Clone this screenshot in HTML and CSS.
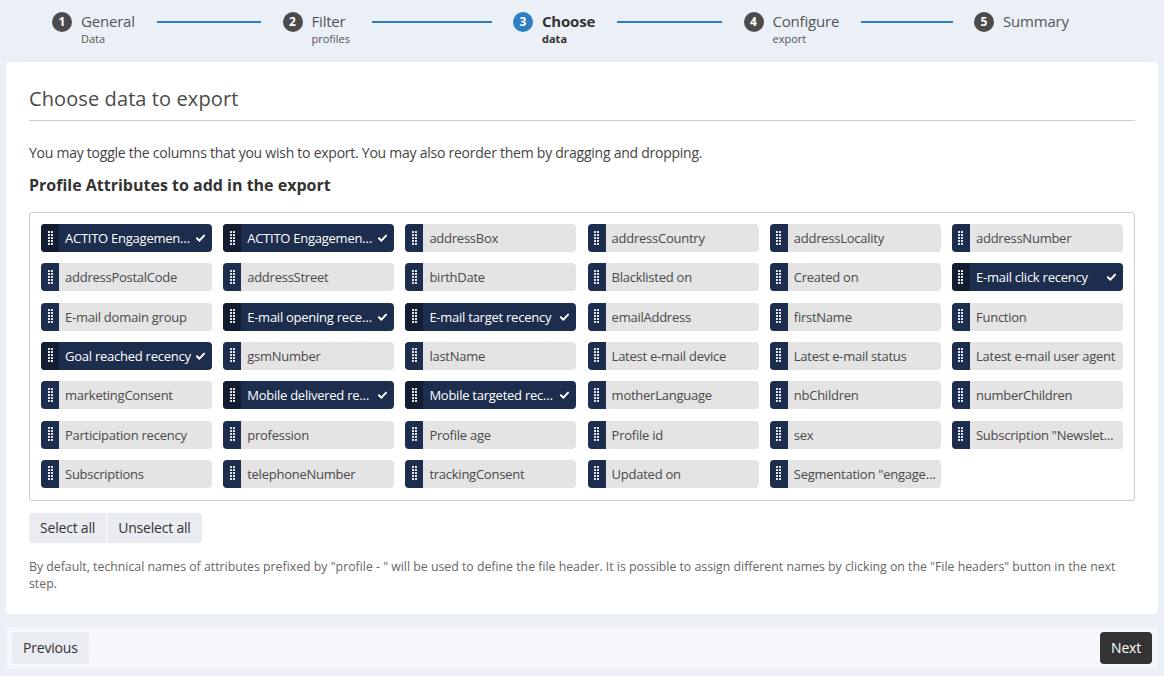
FILE: index.html
```html
<!DOCTYPE html>
<html lang="en">
<head>
<meta charset="utf-8">
<title>Choose data to export</title>
<link rel="stylesheet" href="styles.css">
</head>
<body>
<div class="page">
  <div class="stepper">
    <div class="step"><span class="num">1</span><div class="label"><div class="title">General</div><div class="sub">Data</div></div><span class="line"></span></div>
    <div class="step"><span class="num">2</span><div class="label"><div class="title">Filter</div><div class="sub">profiles</div></div><span class="line"></span></div>
    <div class="step active"><span class="num">3</span><div class="label"><div class="title">Choose</div><div class="sub">data</div></div><span class="line"></span></div>
    <div class="step"><span class="num">4</span><div class="label"><div class="title">Configure</div><div class="sub">export</div></div><span class="line"></span></div>
    <div class="step last"><span class="num">5</span><div class="label"><div class="title">Summary</div></div></div>
  </div>

  <div class="card">
    <h1 class="card-title">Choose data to export</h1>
    <p class="intro">You may toggle the columns that you wish to export. You may also reorder them by dragging and dropping.</p>
    <h2 class="section-title">Profile Attributes to add in the export</h2>

    <div class="chip-box">
      <div class="chip sel"><span class="grip"><i></i></span><span class="text">ACTITO Engagement Score</span><svg class="check" viewBox="0 0 10 8"><path d="M1 4.2 L3.8 7 L9 1.4"/></svg></div>
      <div class="chip sel"><span class="grip"><i></i></span><span class="text">ACTITO Engagement Level</span><svg class="check" viewBox="0 0 10 8"><path d="M1 4.2 L3.8 7 L9 1.4"/></svg></div>
      <div class="chip"><span class="grip"><i></i></span><span class="text">addressBox</span></div>
      <div class="chip"><span class="grip"><i></i></span><span class="text">addressCountry</span></div>
      <div class="chip"><span class="grip"><i></i></span><span class="text">addressLocality</span></div>
      <div class="chip"><span class="grip"><i></i></span><span class="text">addressNumber</span></div>

      <div class="chip"><span class="grip"><i></i></span><span class="text">addressPostalCode</span></div>
      <div class="chip"><span class="grip"><i></i></span><span class="text">addressStreet</span></div>
      <div class="chip"><span class="grip"><i></i></span><span class="text">birthDate</span></div>
      <div class="chip"><span class="grip"><i></i></span><span class="text">Blacklisted on</span></div>
      <div class="chip"><span class="grip"><i></i></span><span class="text">Created on</span></div>
      <div class="chip sel"><span class="grip"><i></i></span><span class="text">E-mail click recency</span><svg class="check" viewBox="0 0 10 8"><path d="M1 4.2 L3.8 7 L9 1.4"/></svg></div>

      <div class="chip"><span class="grip"><i></i></span><span class="text">E-mail domain group</span></div>
      <div class="chip sel"><span class="grip"><i></i></span><span class="text">E-mail opening recency</span><svg class="check" viewBox="0 0 10 8"><path d="M1 4.2 L3.8 7 L9 1.4"/></svg></div>
      <div class="chip sel"><span class="grip"><i></i></span><span class="text">E-mail target recency</span><svg class="check" viewBox="0 0 10 8"><path d="M1 4.2 L3.8 7 L9 1.4"/></svg></div>
      <div class="chip"><span class="grip"><i></i></span><span class="text">emailAddress</span></div>
      <div class="chip"><span class="grip"><i></i></span><span class="text">firstName</span></div>
      <div class="chip"><span class="grip"><i></i></span><span class="text">Function</span></div>

      <div class="chip sel"><span class="grip"><i></i></span><span class="text">Goal reached recency</span><svg class="check" viewBox="0 0 10 8"><path d="M1 4.2 L3.8 7 L9 1.4"/></svg></div>
      <div class="chip"><span class="grip"><i></i></span><span class="text">gsmNumber</span></div>
      <div class="chip"><span class="grip"><i></i></span><span class="text">lastName</span></div>
      <div class="chip"><span class="grip"><i></i></span><span class="text">Latest e-mail device</span></div>
      <div class="chip"><span class="grip"><i></i></span><span class="text">Latest e-mail status</span></div>
      <div class="chip"><span class="grip"><i></i></span><span class="text">Latest e-mail user agent</span></div>

      <div class="chip"><span class="grip"><i></i></span><span class="text">marketingConsent</span></div>
      <div class="chip sel"><span class="grip"><i></i></span><span class="text">Mobile delivered recency</span><svg class="check" viewBox="0 0 10 8"><path d="M1 4.2 L3.8 7 L9 1.4"/></svg></div>
      <div class="chip sel"><span class="grip"><i></i></span><span class="text">Mobile targeted recency</span><svg class="check" viewBox="0 0 10 8"><path d="M1 4.2 L3.8 7 L9 1.4"/></svg></div>
      <div class="chip"><span class="grip"><i></i></span><span class="text">motherLanguage</span></div>
      <div class="chip"><span class="grip"><i></i></span><span class="text">nbChildren</span></div>
      <div class="chip"><span class="grip"><i></i></span><span class="text">numberChildren</span></div>

      <div class="chip"><span class="grip"><i></i></span><span class="text">Participation recency</span></div>
      <div class="chip"><span class="grip"><i></i></span><span class="text">profession</span></div>
      <div class="chip"><span class="grip"><i></i></span><span class="text">Profile age</span></div>
      <div class="chip"><span class="grip"><i></i></span><span class="text">Profile id</span></div>
      <div class="chip"><span class="grip"><i></i></span><span class="text">sex</span></div>
      <div class="chip"><span class="grip"><i></i></span><span class="text">Subscription "Newsletter"</span></div>

      <div class="chip"><span class="grip"><i></i></span><span class="text">Subscriptions</span></div>
      <div class="chip"><span class="grip"><i></i></span><span class="text">telephoneNumber</span></div>
      <div class="chip"><span class="grip"><i></i></span><span class="text">trackingConsent</span></div>
      <div class="chip"><span class="grip"><i></i></span><span class="text">Updated on</span></div>
      <div class="chip"><span class="grip"><i></i></span><span class="text">Segmentation "engagement"</span></div>
    </div>

    <div class="btn-group">
      <button class="btn light">Select all</button><button class="btn light">Unselect all</button>
    </div>

    <p class="note">By default, technical names of attributes prefixed by "profile - " will be used to define the file header. It is possible to assign different names by clicking on the "File headers" button in the next step.</p>
  </div>

  <div class="footer">
    <button class="btn light">Previous</button>
    <button class="btn dark">Next</button>
  </div>
</div>
</body>
</html>
```

FILE: styles.css
```css
* { box-sizing: border-box; }

html, body {
  margin: 0;
  padding: 0;
  background: #ebf0f7;
  font-family: "Open Sans", "Liberation Sans", sans-serif;
  color: #444;
}

.page {
  padding: 0 6px;
}

/* Stepper */
.stepper {
  display: flex;
  height: 62px;
  padding: 11px 0 0 46px;
}

.step {
  display: flex;
  align-items: flex-start;
  width: 230.5px;
  flex: none;
}

.step.last { width: auto; }

.num {
  flex: none;
  width: 20px;
  height: 20px;
  margin-top: 1px;
  border-radius: 50%;
  background: #4b4b4b;
  color: #fff;
  font-size: 12px;
  font-weight: 700;
  line-height: 20px;
  text-align: center;
}

.step.active .num { background: #2d80c3; }

.label {
  margin-left: 9px;
  flex: none;
}

.title {
  font-size: 15px;
  line-height: 20px;
  color: #555;
  letter-spacing: -0.2px;
}

.sub {
  font-size: 11px;
  line-height: 14px;
  color: #555;
  margin-top: 1px;
}

.step.active .title { font-weight: 700; color: #333; }
.step.active .sub { font-weight: 700; color: #333; }

.line {
  flex: 1;
  height: 2px;
  margin: 10px 21.5px 0 22px;
  background: #2d7ec0;
}

/* Card */
.card {
  background: #fff;
  border-radius: 4px;
  padding: 23px 23px 22px;
}

.card-title {
  margin: 0;
  font-size: 20px;
  font-weight: 400;
  line-height: 28px;
  color: #4a4a4a;
  padding-bottom: 7px;
  border-bottom: 1px solid #ccc;
  letter-spacing: 0.1px;
}

.intro {
  margin: 22px 0 0;
  font-size: 14px;
  line-height: 20px;
  color: #444;
  letter-spacing: -0.25px;
}

.section-title {
  margin: 11px 0 0;
  font-size: 16px;
  font-weight: 700;
  line-height: 22px;
  color: #333;
}

.chip-box {
  margin-top: 16px;
  border: 1px solid #ccc;
  border-radius: 3px;
  padding: 11px 11px 12px;
  display: grid;
  grid-template-columns: repeat(6, 1fr);
  column-gap: 11.2px;
  row-gap: 11.33px;
}

.chip {
  display: flex;
  align-items: center;
  height: 28px;
  border-radius: 4px;
  overflow: hidden;
  background: #e4e4e4;
  color: #4a4a4a;
  font-size: 13px;
  letter-spacing: -0.25px;
  min-width: 0;
  padding-right: 5px;
}

.chip.sel {
  background: #1c2d4e;
  color: #fff;
  padding-right: 7px;
}

.grip {
  flex: none;
  width: 18px;
  height: 100%;
  background: #1c2d4e;
  display: flex;
  align-items: center;
  justify-content: center;
}

.chip.sel .grip { background: #121d31; }

.grip i {
  display: block;
  width: 5px;
  height: 15px;
  background:
    repeating-linear-gradient(to bottom, #e6e8ee 0 2px, transparent 2px 3px) 0 0 / 2px 100% no-repeat,
    repeating-linear-gradient(to bottom, #e6e8ee 0 2px, transparent 2px 3px) 3px 0 / 2px 100% no-repeat;
}

.text {
  flex: 1;
  min-width: 0;
  padding-left: 6px;
  white-space: nowrap;
  overflow: hidden;
  text-overflow: ellipsis;
  line-height: 18px;
}

.check {
  flex: none;
  width: 9px;
  height: 8px;
  margin-left: 3px;
  fill: none;
  stroke: #fff;
  stroke-width: 2.2;
  stroke-linecap: round;
  stroke-linejoin: round;
}

/* Buttons */
.btn-group {
  display: flex;
  margin-top: 12px;
}

.btn {
  font-family: "Open Sans", "Liberation Sans", sans-serif;
  font-size: 14px;
  border: none;
  height: 30px;
  padding: 0 11px;
  border-radius: 3px;
  cursor: pointer;
  letter-spacing: -0.2px;
}

.btn.light {
  background: #e9edf1;
  color: #333;
}

.btn-group .btn:first-child {
  border-radius: 3px 0 0 3px;
  border-right: 1px solid #fff;
}

.btn-group .btn:last-child {
  border-radius: 0 3px 3px 0;
}

.note {
  margin: 15px 0 0;
  font-size: 12.3px;
  line-height: 17px;
  color: #666;
}

/* Footer */
.footer {
  margin-top: 13px;
  background: #f5f7fa;
  border-radius: 4px;
  padding: 5px 6px;
  display: flex;
  justify-content: space-between;
}

.footer .btn {
  height: 32px;
  padding: 0 11px;
}

.btn.dark {
  background: #333;
  color: #fff;
  border-radius: 4px;
}
```
